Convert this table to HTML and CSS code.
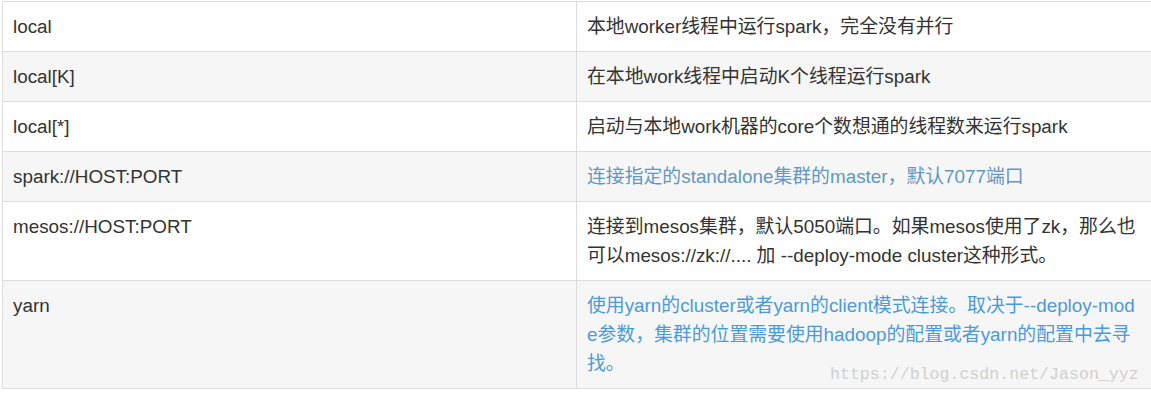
FILE: index.html
```html
<!DOCTYPE html>
<html lang="zh">
<head>
<meta charset="utf-8">
<title>Spark master URLs</title>
<link rel="stylesheet" href="styles.css">
</head>
<body>
<div class="wrap">
  <table class="modes">
    <colgroup><col class="c1"><col class="c2"></colgroup>
    <tbody>
      <tr><td>local</td><td>本地worker线程中运行spark，完全没有并行</td></tr>
      <tr><td>local[K]</td><td>在本地work线程中启动K个线程运行spark</td></tr>
      <tr><td>local[*]</td><td>启动与本地work机器的core个数想通的线程数来运行spark</td></tr>
      <tr><td>spark://HOST:PORT</td><td class="link muted">连接指定的standalone集群的master，默认7077端口</td></tr>
      <tr><td>mesos://HOST:PORT</td><td>连接到mesos集群，默认5050端口。如果mesos使用了zk，那么也可以mesos://zk://.... 加 --deploy-mode cluster这种形式。</td></tr>
      <tr><td>yarn</td><td class="link">使用yarn的cluster或者yarn的client模式连接。取决于--deploy-mode参数，集群的位置需要使用hadoop的配置或者yarn的配置中去寻找。</td></tr>
    </tbody>
  </table>
  <div class="watermark">https://blog.csdn.net/Jason_yyz</div>
</div>
</body>
</html>
```

FILE: styles.css
```css
html, body {
  margin: 0;
  padding: 0;
  background: #fff;
  overflow: hidden;
}
.wrap {
  position: relative;
  padding: 1px 0 0 2px;
}
.modes {
  width: 1151px;
  border-collapse: collapse;
  table-layout: fixed;
  font-family: "Liberation Sans", "Noto Sans CJK SC", Arial, sans-serif;
  font-size: 18.85px;
  line-height: 29px;
  color: #333;
}
.c1 { width: 574px; }
.modes td {
  border: 1px solid #ddd;
  padding: 10px 10px 10px 10px;
  vertical-align: top;
  word-break: break-all;
}
.modes td + td {
  padding-right: 13px;
}
.modes tr:nth-child(even) td {
  background: #f6f6f6;
}
.modes td.link { color: #4a9ae0; }
.modes td.link.muted { color: #6196c5; }
.watermark {
  position: absolute;
  left: 830px;
  top: 365px;
  font-family: "Liberation Mono", "DejaVu Sans Mono", monospace;
  font-size: 16.6px;
  line-height: 19px;
  color: rgba(200, 200, 200, 0.85);
  white-space: nowrap;
}
```
